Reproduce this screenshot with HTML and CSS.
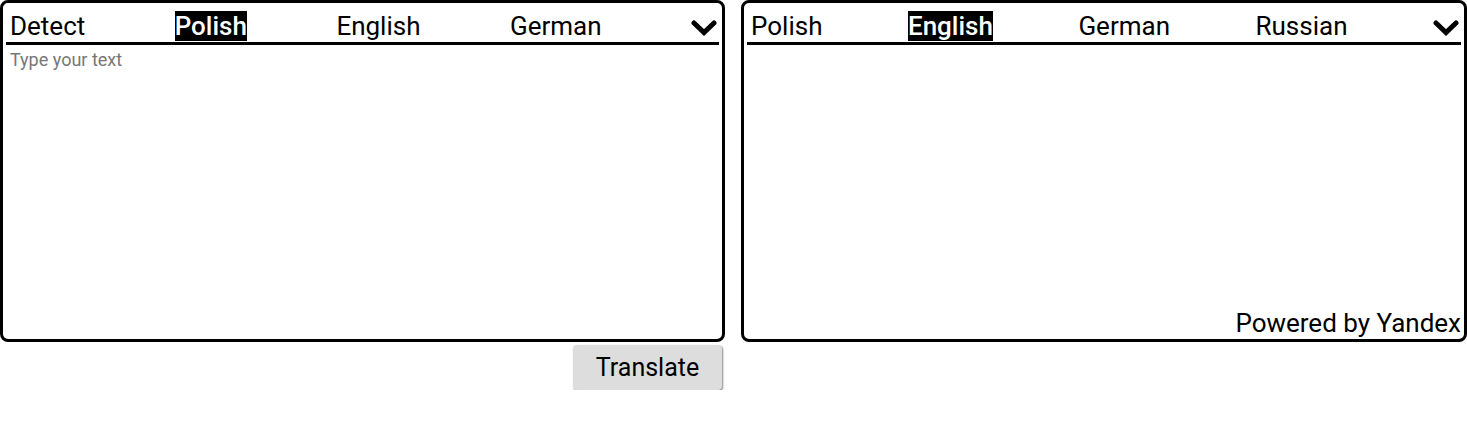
FILE: index.html
```html
<!DOCTYPE html>
<html>
<head>
<meta charset="utf-8">
<link rel="stylesheet" href="styles.css">
</head>
<body>
<div class="translator">
  <div class="column">
    <div class="panel">
      <div class="langs">
        <span class="lang">Detect</span>
        <span class="lang active">Polish</span>
        <span class="lang">English</span>
        <span class="lang">German</span>
        <span class="chev"><svg width="26" height="16" viewBox="0 0 26 16"><path d="M3 3 L13 12.5 L23 3" fill="none" stroke="#000" stroke-width="5" stroke-linecap="round" stroke-linejoin="miter"/></svg></span>
      </div>
      <textarea class="input" placeholder="Type your text"></textarea>
    </div>
    <div class="actions">
      <button class="translate">Translate</button>
    </div>
  </div>
  <div class="column">
    <div class="panel">
      <div class="langs">
        <span class="lang">Polish</span>
        <span class="lang active">English</span>
        <span class="lang">German</span>
        <span class="lang">Russian</span>
        <span class="chev"><svg width="26" height="16" viewBox="0 0 26 16"><path d="M3 3 L13 12.5 L23 3" fill="none" stroke="#000" stroke-width="5" stroke-linecap="round" stroke-linejoin="miter"/></svg></span>
      </div>
      <div class="output"></div>
      <div class="powered">Powered by Yandex</div>
    </div>
  </div>
</div>
</body>
</html>
```

FILE: styles.css
```css
html, body {
  margin: 0;
  padding: 0;
  background: #fff;
}
body {
  font-family: Roboto, "Liberation Sans", sans-serif;
  color: #000;
}
.translator {
  display: flex;
  gap: 16px;
  width: 1467px;
}
.column {
  width: 725px;
  flex: 0 0 auto;
}
.column + .column {
  width: 726px;
}
.panel {
  box-sizing: border-box;
  height: 342px;
  border: 3px solid #000;
  border-radius: 8px;
  padding: 3px;
  display: flex;
  flex-direction: column;
}
.langs {
  display: flex;
  justify-content: space-between;
  align-items: center;
  padding: 5px 2px 1px 4px;
  border-bottom: 3px solid #000;
}
.lang {
  font-size: 26px;
  line-height: 30px;
}
.lang.active {
  background: #000;
  color: #fff;
  font-weight: 500;
}
.chev {
  display: flex;
  align-items: center;
  height: 30px;
  padding-top: 4px;
  box-sizing: border-box;
}
.chev svg {
  display: block;
}
.input {
  flex: 1;
  border: none;
  outline: none;
  resize: none;
  font-family: Roboto, "Liberation Sans", sans-serif;
  font-size: 18px;
  padding: 4px 4px;
  margin: 0;
}
.input::placeholder {
  color: #777;
}
.output {
  flex: 1;
}
.powered {
  text-align: right;
  font-size: 26px;
  line-height: 28px;
  margin-bottom: -1px;
}
.actions {
  display: flex;
  justify-content: flex-end;
  padding: 3px 3px 0 0;
}
.translate {
  width: 149px;
  height: 45px;
  background: #dddddd;
  border: none;
  border-radius: 4px;
  box-shadow: 1px 1px 2px #888;
  font-family: Roboto, "Liberation Sans", sans-serif;
  font-size: 25px;
  color: #000;
  padding: 0;
}
```
